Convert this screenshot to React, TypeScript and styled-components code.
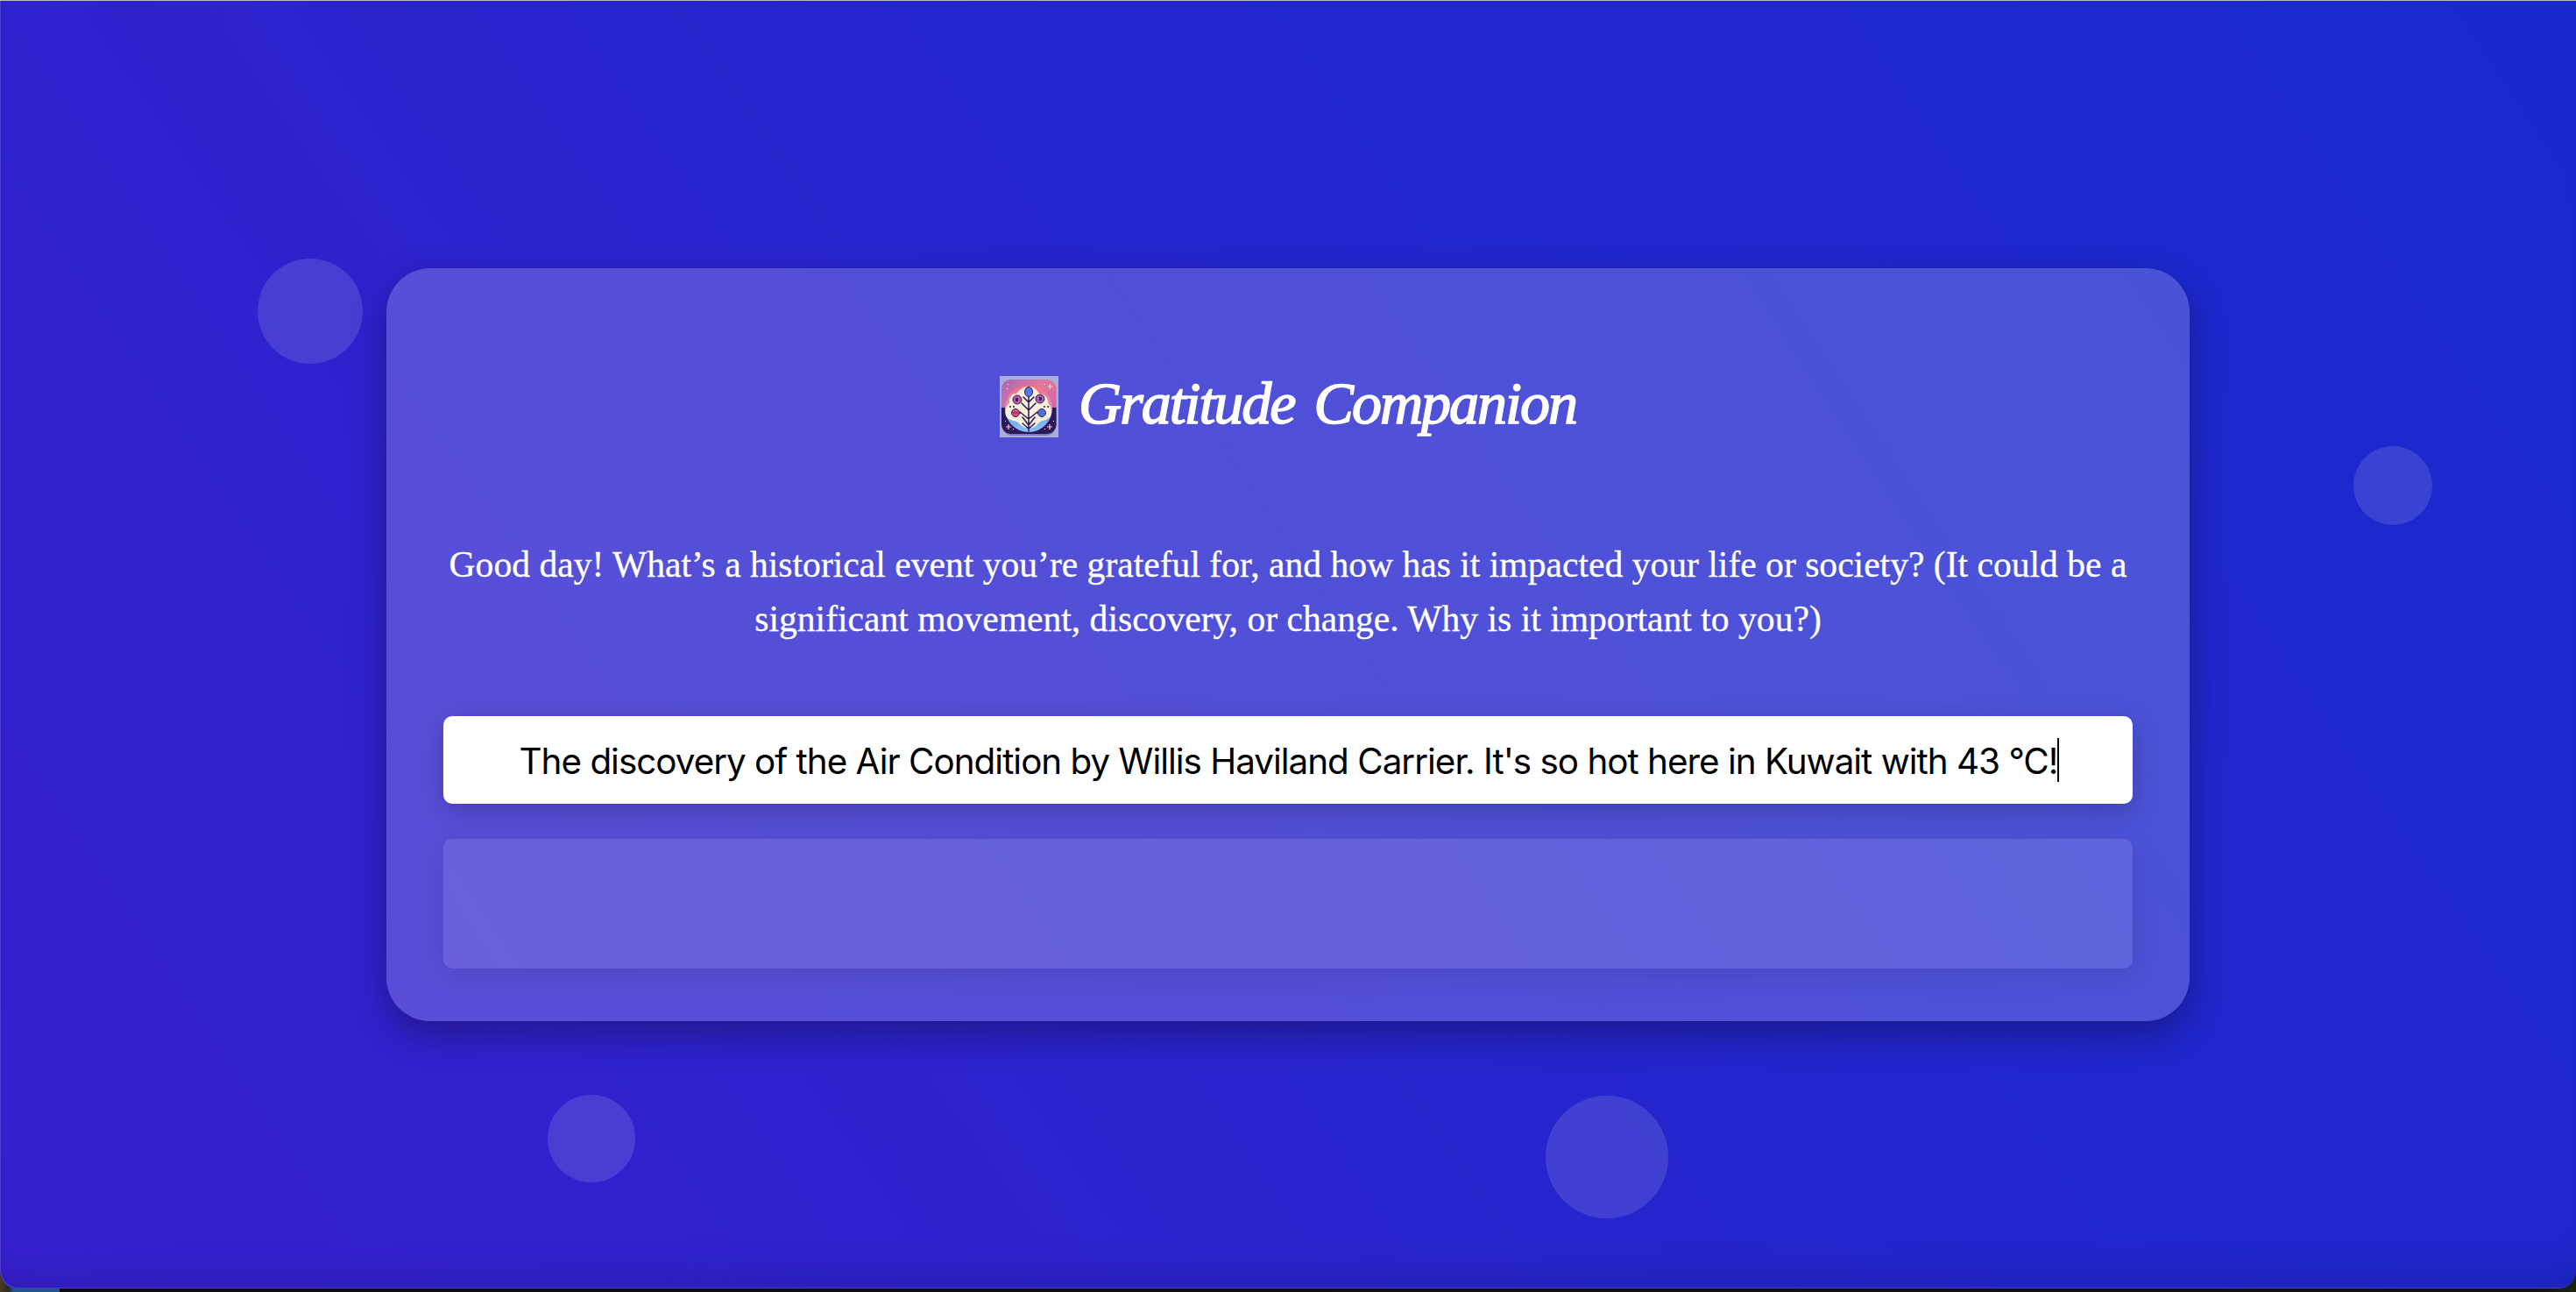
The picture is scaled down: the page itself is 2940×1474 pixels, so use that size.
import React from "react";
import styled, { createGlobalStyle } from "styled-components";

const GlobalStyle = createGlobalStyle`
  * { box-sizing: border-box; }
  html, body { margin: 0; padding: 0; overflow: hidden; }
  body { background: #0f0c10; }
`;

const Desktop = styled.div`
  width: 2940px;
  height: 1474px;
  overflow: hidden;
  border-top: 1px solid #b9b8c6;
  background: linear-gradient(90deg, #4a3d1c 0, #2a2a30 10px, #24558f 16px, #24558f 68px, #0e0b12 68px, #14100f 2900px, #1c2410 2940px) bottom / 100% 40px no-repeat #0e0b12;
`;

const Page = styled.main`
  position: relative;
  height: 1469px;
  display: flex;
  justify-content: center;
  align-items: flex-start;
  padding-top: 305px;
  overflow: hidden;
  border-radius: 0 0 20px 20px;
  background: linear-gradient(56deg, #3620ce 0%, #2525cd 52%, #182acd 100%);
  box-shadow: inset 1px -1px 0 rgba(255, 255, 255, 0.14), inset 0 -50px 50px -40px rgba(0, 0, 0, 0.14);
`;

const Bubble = styled.span<{ $x: number; $y: number; $size: number }>`
  position: absolute;
  left: ${(p) => p.$x}px;
  top: ${(p) => p.$y}px;
  width: ${(p) => p.$size}px;
  height: ${(p) => p.$size}px;
  border-radius: 50%;
  background: rgba(255, 255, 255, 0.125);
`;

const Card = styled.section`
  position: relative;
  width: 2058px;
  height: 859px;
  padding: 108px 65px 60px;
  display: flex;
  flex-direction: column;
  align-items: stretch;
  border-radius: 50px;
  background: rgba(255, 255, 255, 0.2);
  box-shadow: 0 16px 40px rgba(0, 0, 0, 0.3);
`;

const Heading = styled.header`
  display: flex;
  align-items: center;
  justify-content: center;
  height: 100px;
  gap: 23px;
`;

const Title = styled.h1`
  margin: 0;
  padding-bottom: 9px;
  font: italic 400 68px/100px "Liberation Serif", serif;
  letter-spacing: -2px;
  word-spacing: 7px;
  color: #fff;
  -webkit-text-stroke: 1.6px #fff;
  white-space: nowrap;
`;

const Prompt = styled.p`
  margin: 99px -20px 0;
  height: 125px;
  font: 400 41.6px/62px "Liberation Serif", serif;
  color: #fff;
  -webkit-text-stroke: 0.3px #fff;
  text-align: center;
  white-space: nowrap;
`;

const Answer = styled.div`
  margin-top: 79px;
  height: 100px;
  flex: none;
  display: flex;
  align-items: center;
  justify-content: center;
  padding-left: 3px;
  border-radius: 10px;
  background: #fff;
  box-shadow: 0 8px 30px rgba(0, 0, 0, 0.2);
  color: #000;
`;

const AnswerText = styled.span`
  padding-top: 3px;
  font: 400 40.4px/50px Inter, sans-serif;
  letter-spacing: -1px;
  white-space: nowrap;
`;

const Caret = styled.span`
  width: 2px;
  height: 50px;
  background: #000;
`;

const Reply = styled.div`
  margin-top: 40px;
  height: 148px;
  flex: none;
  border-radius: 10px;
  background: rgba(255, 255, 255, 0.105);
  box-shadow: 0 8px 30px rgba(0, 0, 0, 0.1);
`;

const TreeLogo = () => (
  <svg width="67" height="70" viewBox="0 0 67 70">
    <defs>
      <linearGradient id="sky" x1="0" y1="0" x2="1" y2="1">
        <stop offset="0" stopColor="#a568b8" />
        <stop offset=".4" stopColor="#e5779c" />
        <stop offset="1" stopColor="#b95fb4" />
      </linearGradient>
      <linearGradient id="halo" x1="0" y1="0" x2="0" y2="1">
        <stop offset="0" stopColor="#f0707f" />
        <stop offset=".5" stopColor="#e691b5" />
        <stop offset=".6" stopColor="#6da3e8" />
        <stop offset="1" stopColor="#8dc0f5" />
      </linearGradient>
      <clipPath id="tile"><rect x="2" y="4" width="62.500" height="62" rx="11" /></clipPath>
    </defs>
    <rect width="67" height="70" fill="#a9afd8" />
    <rect x="3" y="6" width="61" height="62" rx="11" fill="#7980b4" />
    <g clipPath="url(#tile)">
      <rect x="2" y="4" width="63" height="62" fill="url(#sky)" />
      <rect x="2" y="36" width="63" height="30" fill="#2b185d" />
      <circle cx="33" cy="37" r="27" fill="url(#halo)" />
      <path d="M33 12C25 12 22 17 19 20C12 20 11 26 11 31C6 35 5 43 8 47C12 52 19 50 22 54C27 61 40 61 44 54C47 50 55 51 58 46C61 39 57 34 55 30C55 23 49 20 45 20C42 15 39 12 33 12Z" fill="#f8efdc" />
    </g>
    <g fill="none" stroke="#281653" strokeWidth="1.500" strokeLinecap="round" strokeLinejoin="round">
      <path d="M33 22V63M27 24l6 6 6-6M25 31l8 8 8-8M23 41l10 8 10-8M20 42h4M43 42h4M26 47l7 9 7-9M26 54l7 6 7-6" />
    </g>
    <g stroke="#302064" strokeWidth="1">
      <ellipse cx="33" cy="18" rx="4.500" ry="5.500" fill="#527bdf" />
      <circle cx="20" cy="27" r="5" fill="#bb5b9e" />
      <circle cx="46" cy="26" r="5" fill="#b75aa2" />
      <circle cx="18" cy="42" r="4.500" fill="#d94e75" />
      <circle cx="48" cy="42" r="4.500" fill="#4e73d7" />
    </g>
    <path d="M18 25h3v4h-3zM45 24h3v4h-3z" fill="#28246b" />
    <path d="M15 42h6" stroke="#722055" />
    <path d="M57.500 9v6M54.500 12h6M10 55v6M7 58h6M57 55v6M54 58h6" stroke="#ffc9cf" strokeWidth="1.200" />
    <path d="M9 9h1v1H9zM8 14h1v1H8zM51 9h1v1h-1zM6 51h1v1H6zM15 60h1v1h-1zM51 60h1v1h-1zM61 51h1v1h-1z" fill="#fff" />
    <path d="M11 35h2M15 35h2M50 35h2M54 35h2" stroke="#281653" strokeWidth="1.500" />
  </svg>
);

export default function App() {
  return (
    <Desktop>
      <GlobalStyle />
      <Page>
        <Bubble $x={294} $y={294} $size={120} />
        <Bubble $x={2686} $y={508} $size={90} />
        <Bubble $x={625} $y={1248} $size={100} />
        <Bubble $x={1764} $y={1249} $size={140} />
        <Card>
          <Heading>
            <TreeLogo />
            <Title>Gratitude Companion</Title>
          </Heading>
          <Prompt>
            Good day! What’s a historical event you’re grateful for, and how has it impacted your life or society? (It could be a
            <br />
            significant movement, discovery, or change. Why is it important to you?)
          </Prompt>
          <Answer>
            <AnswerText>
              The discovery of the Air Condition by Willis Haviland Carrier. It's so hot here in Kuwait with 43 °C!
            </AnswerText>
            <Caret />
          </Answer>
          <Reply />
        </Card>
      </Page>
    </Desktop>
  );
}
